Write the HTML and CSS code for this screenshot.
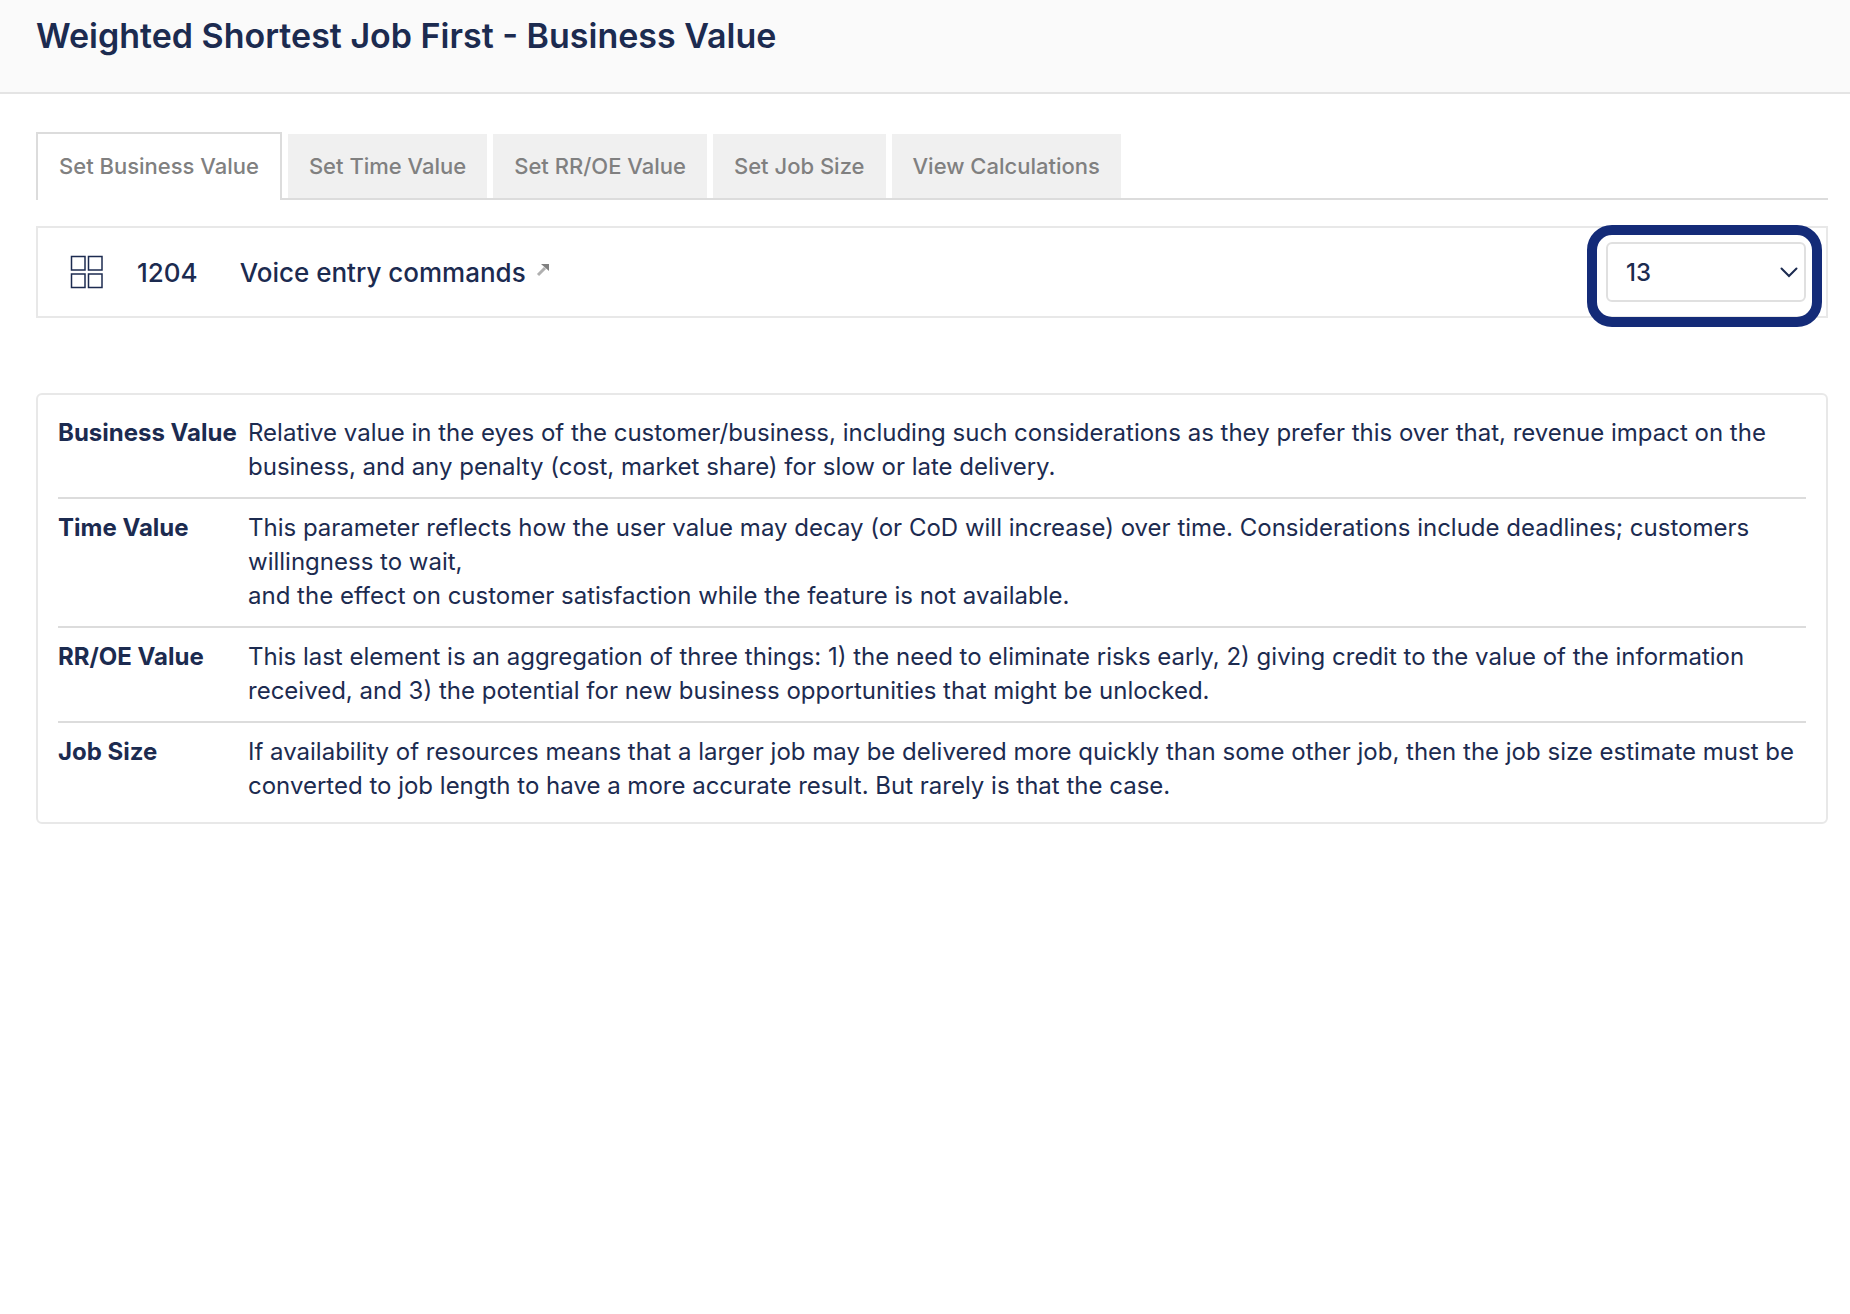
FILE: index.html
```
<!DOCTYPE html>
<html lang="en">
<head>
  <meta charset="UTF-8">
  <meta name="viewport" content="width=device-width, initial-scale=1.0">
  <title>Weighted Shortest Job First - Business Value</title>
  <link rel="stylesheet" href="styles.css">
</head>
<body>
  <header>
    <h1>Weighted Shortest Job First - Business Value</h1>
  </header>
  <main class="container">
    <nav class="tabs">
      <button type="button" class="tab active">Set Business Value</button>
      <button type="button" class="tab">Set Time Value</button>
      <button type="button" class="tab">Set RR/OE Value</button>
      <button type="button" class="tab">Set Job Size</button>
      <button type="button" class="tab">View Calculations</button>
    </nav>

    <div class="job-row">
      <svg class="job-icon" width="34" height="34" viewBox="0 0 34 34" aria-hidden="true">
        <rect x="1.5" y="1.5" width="13.5" height="13.5"/>
        <rect x="18.5" y="1.5" width="13.5" height="13.5"/>
        <rect x="1.5" y="19" width="13.5" height="13.5"/>
        <rect x="18.5" y="19" width="13.5" height="13.5"/>
      </svg>
      <span class="job-id">1204</span>
      <a class="job-link" href="#">
        <span id="jobName">Voice entry commands</span>
        <svg class="arrow" width="14" height="14" viewBox="0 0 14 14" aria-hidden="true">
          <path class="arrow-line" d="M2 12L9 5"/>
          <path class="arrow-head" d="M5 1h8v7z"/>
        </svg>
      </a>
      <div class="value-picker">
        <select aria-labelledby="jobName">
          <option>1</option>
          <option>2</option>
          <option>3</option>
          <option>5</option>
          <option>8</option>
          <option selected>13</option>
          <option>20</option>
        </select>
        <svg class="chevron" width="18" height="12" viewBox="0 0 18 12" aria-hidden="true">
          <path d="M1.5 1.5L9 9l7.5-7.5"/>
        </svg>
      </div>
    </div>

    <div class="info">
      <table>
        <tr>
          <th scope="row">Business Value</th>
          <td>Relative value in the eyes of the customer/business, including such considerations as they prefer this over that, revenue impact on the business, and any penalty (cost, market share) for slow or late delivery.</td>
        </tr>
        <tr>
          <th scope="row">Time Value</th>
          <td>This parameter reflects how the user value may decay (or CoD will increase) over time. Considerations include deadlines; customers willingness to wait,<br>and the effect on customer satisfaction while the feature is not available.</td>
        </tr>
        <tr>
          <th scope="row">RR/OE Value</th>
          <td>This last element is an aggregation of three things: 1) the need to eliminate risks early, 2) giving credit to the value of the information received, and 3) the potential for new business opportunities that might be unlocked.</td>
        </tr>
        <tr>
          <th scope="row">Job Size</th>
          <td>If availability of resources means that a larger job may be delivered more quickly than some other job, then the job size estimate must be converted to job length to have a more accurate result. But rarely is that the case.</td>
        </tr>
      </table>
    </div>
  </main>
</body>
</html>
```
FILE: styles.css
```
* { box-sizing: border-box; }
body {
  margin: 0;
  font-family: Inter, sans-serif;
  font-size: 24px;
  color: #1c2b50;
  background: #fff;
}
header {
  background: #fafafa;
  border-bottom: 2px solid #e4e4e4;
  padding: 15px 36px 35px;
}
h1 {
  margin: 0;
  font-size: 34px;
  line-height: 42px;
  font-weight: 600;
}
.container {
  padding: 38px 22px 0 36px;
}

/* tabs */
.tabs {
  display: flex;
  align-items: flex-end;
  gap: 6px;
  border-bottom: 2px solid #dcdcdc;
  margin-bottom: 26px;
}
.tab {
  height: 64px;
  padding: 0 21px;
  border: none;
  background: #f0f0f0;
  color: #808080;
  font: 500 22px Inter, sans-serif;
  cursor: pointer;
}
.tab.active {
  height: 68px;
  margin-bottom: -2px;
  padding-bottom: 2px;
  border: 2px solid #dcdcdc;
  border-bottom: none;
  background: #fff;
}

/* job row */
.job-row {
  display: flex;
  align-items: center;
  height: 92px;
  padding: 0 20px 0 32px;
  border: 2px solid #e8e8e8;
  font-size: 26px;
  font-weight: 500;
}
.job-icon {
  fill: none;
  stroke: #1c2b50;
  stroke-width: 1.5;
}
.job-id {
  margin: 0 42px 0 33px;
}
.job-link {
  display: flex;
  gap: 10px;
  color: inherit;
  text-decoration: none;
}
.arrow {
  margin-top: 6px;
}
.arrow-line {
  fill: none;
  stroke: #b0b0b0;
  stroke-width: 3;
}
.arrow-head { fill: #808080; }

.value-picker {
  position: relative;
  margin-left: auto;
}
.value-picker::after {
  content: "";
  position: absolute;
  inset: -17px -16px -25px -19px;
  border: 10px solid #142b78;
  border-radius: 25px;
  pointer-events: none;
}
.value-picker select {
  display: block;
  appearance: none;
  width: 200px;
  height: 60px;
  padding: 0 48px 0 18px;
  border: 2px solid #e0e0e0;
  border-radius: 6px;
  background: #fff;
  color: inherit;
  font: 500 24px Inter, sans-serif;
}
.chevron {
  position: absolute;
  top: 25px;
  right: 8px;
  fill: none;
  stroke: #1c2b50;
  stroke-width: 2;
  stroke-linecap: round;
  pointer-events: none;
}

/* explanations */
.info {
  margin-top: 75px;
  padding: 9px 20px 6px;
  border: 2px solid #e8e8e8;
  border-radius: 6px;
}
.info table {
  width: 100%;
  border-collapse: collapse;
}
.info th,
.info td {
  padding: 12px 0 13px;
  line-height: 34px;
  text-align: left;
  vertical-align: top;
}
.info th {
  width: 190px;
  font-weight: 700;
  white-space: nowrap;
}
.info tr + tr {
  border-top: 2px solid #dcdcdc;
}
```
